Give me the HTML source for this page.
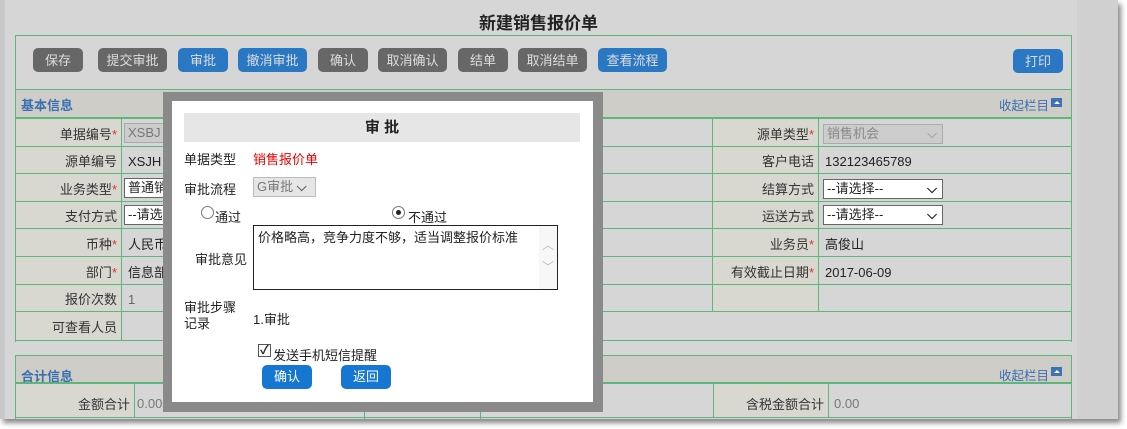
<!DOCTYPE html>
<html><head><meta charset="utf-8">
<style>
*{margin:0;padding:0;box-sizing:border-box}
body{width:1127px;height:429px;background:#fff;font-family:"Liberation Sans","Noto Sans CJK SC",sans-serif;font-size:13px;color:#222;position:relative;overflow:hidden}
.a{position:absolute}
#page{left:0;top:0;width:1118px;height:419px;background:#d6d6d6;box-shadow:3px 4px 5px #888;overflow:hidden}
.btn{position:absolute;top:48px;height:24px;border-radius:5px;color:#ddd;text-align:center;line-height:25px;font-size:13px}
.g{background:#676767}.b{background:#2a78c4}
.box{border:1px solid #5cb87a}
.hd{background:#cfcdc8;border-bottom:2px solid #5cb87a}
.lab{position:absolute;background:#d8d7d0;text-align:right;padding-right:4px;padding-top:2px;border-right:1px solid #5cb87a;border-bottom:1px solid #5cb87a;color:#333}
.cel{position:absolute;border-right:1px solid #5cb87a;border-bottom:1px solid #5cb87a;padding-left:6px;padding-top:2px}
.s{color:#d33}
.sel{position:absolute;height:20px;border:1px solid #666;background:#fff;font-size:13px;padding-left:3px;line-height:18px}
.blue{color:#3b6fb0}
</style></head><body>
<div id="page" class="a">
<div class="a" style="left:0;top:0;width:5px;height:419px;background:#c9c9c9"></div>
<div class="a" style="left:1077px;top:0;width:41px;height:419px;background:#d0d0d0"></div>
<div class="a" style="left:0;top:9px;width:1077px;text-align:center;font-size:17px;font-weight:bold;color:#222">新建销售报价单</div>

<div class="a box" style="left:15px;top:35px;width:1057px;height:56px"></div>
<div class="btn g" style="left:33px;width:50px">保存</div>
<div class="btn g" style="left:98px;width:69px">提交审批</div>
<div class="btn b" style="left:178px;width:50px">审批</div>
<div class="btn b" style="left:238px;width:69px">撤消审批</div>
<div class="btn g" style="left:318px;width:50px">确认</div>
<div class="btn g" style="left:378px;width:69px">取消确认</div>
<div class="btn g" style="left:458px;width:50px">结单</div>
<div class="btn g" style="left:518px;width:69px">取消结单</div>
<div class="btn b" style="left:598px;width:69px">查看流程</div>
<div class="btn b" style="left:1013px;width:50px;top:49px">打印</div>

<!-- basic info -->
<div class="a box" style="left:15px;top:89px;width:1057px;height:253px;border-bottom:none"></div>
<div class="a hd" style="left:16px;top:90px;width:1055px;height:29px"></div>
<div class="a blue" style="left:21px;top:95px;font-weight:bold;font-size:13px">基本信息</div>
<div class="a blue" style="left:999px;top:95px;font-size:12.5px">收起栏目</div>
<div class="a" style="left:1051px;top:98px;width:11px;height:9px;background:#3d72b4"><div style="margin:3px auto 0;width:0;height:0;border-left:3px solid transparent;border-right:3px solid transparent;border-bottom:3px solid #fff"></div></div>

<div class="lab" style="left:16px;top:119px;width:106px;height:28px;line-height:27px">单据编号<span class="s">*</span></div>
<div class="lab" style="left:16px;top:147px;width:106px;height:27px;line-height:26px">源单编号</div>
<div class="lab" style="left:16px;top:174px;width:106px;height:28px;line-height:27px">业务类型<span class="s">*</span></div>
<div class="lab" style="left:16px;top:202px;width:106px;height:27px;line-height:26px">支付方式</div>
<div class="lab" style="left:16px;top:229px;width:106px;height:28px;line-height:27px">币种<span class="s">*</span></div>
<div class="lab" style="left:16px;top:257px;width:106px;height:28px;line-height:27px">部门<span class="s">*</span></div>
<div class="lab" style="left:16px;top:285px;width:106px;height:27px;line-height:26px">报价次数</div>
<div class="lab" style="left:16px;top:312px;width:106px;height:29px;line-height:28px">可查看人员</div>

<div class="cel" style="left:122px;top:119px;width:591px;height:28px"></div>
<div class="sel" style="left:124px;top:123px;width:60px;background:#ccc;border-color:#aaa;color:#777">XSBJ</div>
<div class="cel" style="left:122px;top:147px;width:591px;height:27px;line-height:26px">XSJH</div>
<div class="cel" style="left:122px;top:174px;width:591px;height:28px"></div>
<div class="sel" style="left:124px;top:178px;width:60px">普通销</div>
<div class="cel" style="left:122px;top:202px;width:591px;height:27px"></div>
<div class="sel" style="left:124px;top:205px;width:60px">--请选</div>
<div class="cel" style="left:122px;top:229px;width:591px;height:28px;line-height:27px">人民币</div>
<div class="cel" style="left:122px;top:257px;width:591px;height:28px;line-height:27px">信息部</div>
<div class="cel" style="left:122px;top:285px;width:591px;height:27px;line-height:26px;color:#666">1</div>
<div class="cel" style="left:122px;top:312px;width:950px;height:29px"></div>
<div class="a" style="left:364px;top:119px;width:1px;height:193px;background:#5cb87a"></div>
<div class="a" style="left:480px;top:119px;width:1px;height:193px;background:#5cb87a"></div>
<div class="a" style="left:585px;top:155px">司</div>

<div class="lab" style="left:713px;top:119px;width:106px;height:28px;line-height:27px">源单类型<span class="s">*</span></div>
<div class="lab" style="left:713px;top:147px;width:106px;height:27px;line-height:26px">客户电话</div>
<div class="lab" style="left:713px;top:174px;width:106px;height:28px;line-height:27px">结算方式</div>
<div class="lab" style="left:713px;top:202px;width:106px;height:27px;line-height:26px">运送方式</div>
<div class="lab" style="left:713px;top:229px;width:106px;height:28px;line-height:27px">业务员<span class="s">*</span></div>
<div class="lab" style="left:713px;top:257px;width:106px;height:28px;line-height:27px">有效截止日期<span class="s">*</span></div>
<div class="lab" style="left:713px;top:285px;width:106px;height:27px"></div>
<div class="cel" style="left:819px;top:119px;width:253px;height:28px"></div>
<div class="sel" style="left:823px;top:124px;width:120px;background:#ccc;border-color:#aaa;color:#888">销售机会<span style="position:absolute;right:5px;top:0">⌵</span></div>
<div class="cel" style="left:819px;top:147px;width:253px;height:27px;line-height:26px">132123465789</div>
<div class="cel" style="left:819px;top:174px;width:253px;height:28px"></div>
<div class="sel" style="left:823px;top:179px;width:120px">--请选择--<span style="position:absolute;right:5px;top:0;font-weight:bold">⌵</span></div>
<div class="cel" style="left:819px;top:202px;width:253px;height:27px"></div>
<div class="sel" style="left:823px;top:205px;width:120px">--请选择--<span style="position:absolute;right:5px;top:0;font-weight:bold">⌵</span></div>
<div class="cel" style="left:819px;top:229px;width:253px;height:28px;line-height:27px">高俊山</div>
<div class="cel" style="left:819px;top:257px;width:253px;height:28px;line-height:27px">2017-06-09</div>
<div class="cel" style="left:819px;top:285px;width:253px;height:27px"></div>

<!-- totals -->
<div class="a box" style="left:15px;top:355px;width:1057px;height:70px"></div>
<div class="a hd" style="left:16px;top:356px;width:1055px;height:28px"></div>
<div class="a blue" style="left:21px;top:366px;font-weight:bold">合计信息</div>
<div class="a blue" style="left:999px;top:365px;font-size:12.5px">收起栏目</div>
<div class="a" style="left:1051px;top:367px;width:11px;height:9px;background:#3d72b4"><div style="margin:3px auto 0;width:0;height:0;border-left:3px solid transparent;border-right:3px solid transparent;border-bottom:3px solid #fff"></div></div>
<div class="lab" style="left:16px;top:384px;width:119px;height:33px;line-height:38px;border-bottom:none">金额合计</div>
<div class="a" style="left:137px;top:396px;color:#777">0.00</div>
<div class="lab" style="left:713px;top:384px;width:116px;height:33px;line-height:38px;border-bottom:none;border-left:1px solid #5cb87a">含税金额合计</div>
<div class="a" style="left:834px;top:396px;color:#777">0.00</div>
<div class="a" style="left:364px;top:384px;width:1px;height:35px;background:#5cb87a"></div>
<div class="a" style="left:480px;top:384px;width:1px;height:35px;background:#5cb87a"></div>
<div class="a" style="left:15px;top:417px;width:1057px;height:1px;background:#5cb87a"></div>

<!-- modal -->
<div class="a" style="left:163px;top:92px;width:440px;height:320px;background:#8a8a8a"></div>
<div class="a" style="left:172px;top:101px;width:421px;height:301px;background:#fff"></div>
<div class="a" style="left:184px;top:113px;width:396px;height:29px;background:#e6e6e6;text-align:center;line-height:29px;font-weight:bold;font-size:15px">审 批</div>
<div class="a" style="left:184px;top:149px">单据类型</div>
<div class="a" style="left:253px;top:149px;color:#e00">销售报价单</div>
<div class="a" style="left:184px;top:179px">审批流程</div>
<div class="a" style="left:253px;top:177px;width:63px;height:20px;border:1px solid #bbb;background:#e6e6e6;color:#777;line-height:18px;padding-left:3px">G审批 <span style="color:#666;font-weight:bold">⌵</span></div>
<div class="a" style="left:201px;top:206px;width:13px;height:13px;border:1px solid #777;border-radius:50%;background:#fff"></div>
<div class="a" style="left:215px;top:207px">通过</div>
<div class="a" style="left:392px;top:206px;width:13px;height:13px;border:1px solid #777;border-radius:50%;background:#fff"><div style="width:5px;height:5px;background:#222;border-radius:50%;margin:3px"></div></div>
<div class="a" style="left:408px;top:207px">不通过</div>
<div class="a" style="left:253px;top:225px;width:305px;height:65px;border:1px solid #222;background:#fff;padding:1px 4px">价格略高，竞争力度不够，适当调整报价标准</div>
<div class="a" style="left:539px;top:226px;width:18px;height:63px;background:#f7f7f7;color:#bbb;font-size:12px;text-align:center;line-height:22px;padding-top:8px">︿<br>﹀</div>
<div class="a" style="left:195px;top:249px">审批意见</div>
<div class="a" style="left:184px;top:300px;line-height:16px">审批步骤<br>记录</div>
<div class="a" style="left:253px;top:309px">1.审批</div>
<div class="a" style="left:258px;top:344px;width:13px;height:13px;border:1px solid #555;background:#fff;font-size:12px;line-height:11px;text-align:center;font-weight:bold">✓</div>
<div class="a" style="left:273px;top:345px">发送手机短信提醒</div>
<div class="a" style="left:262px;top:365px;width:50px;height:24px;background:#1677d2;border-radius:5px;color:#fff;text-align:center;line-height:24px">确认</div>
<div class="a" style="left:341px;top:365px;width:50px;height:24px;background:#1677d2;border-radius:5px;color:#fff;text-align:center;line-height:24px">返回</div>
</div>
</body></html>
